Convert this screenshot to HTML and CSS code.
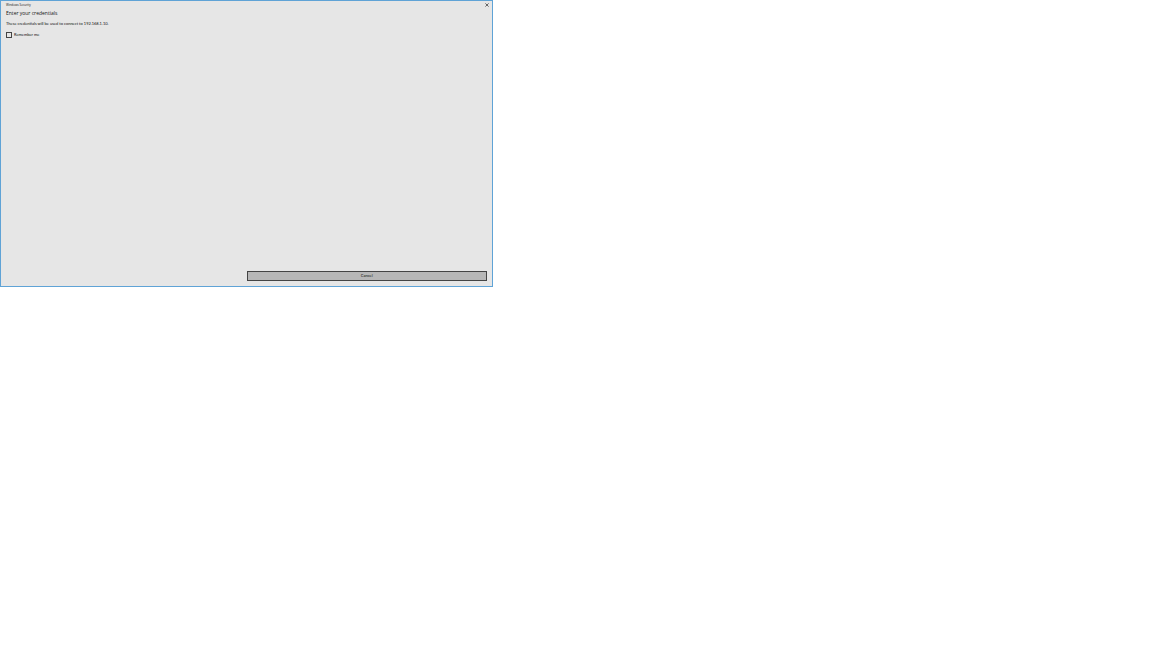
FILE: index.html
```
<!DOCTYPE html>
<html lang="en">
<head>
    <meta charset="utf-8">
    <title>Windows Security</title>
    <link rel="stylesheet" href="styles.css">
</head>
<body>
    <form class="dialog">
        <header class="titlebar">
            <span>Windows Security</span>
            <button type="button" class="close" aria-label="Close">
                <svg viewBox="0 0 10 10"><path d="M1 1L9 9M9 1L1 9"/></svg>
            </button>
        </header>

        <main class="content">
            <h1>Enter your credentials</h1>
            <p>These credentials will be used to connect to 192.168.1.10.</p>
            <div class="remember">
                <input type="checkbox" id="remember" name="remember">
                <label for="remember">Remember me</label>
            </div>
        </main>

        <footer class="actions">
            <button type="button" class="cancel">Cancel</button>
        </footer>
    </form>
</body>
</html>
```

FILE: styles.css
```
* {
    box-sizing: border-box;
}

body {
    margin: 0;
    background-color: #fff;
    color: #111;
    font-family: Lato, "Open Sans", sans-serif;
    font-size: 4px;
    line-height: 4px;
}

.dialog {
    display: flex;
    flex-direction: column;
    width: 100%;
    max-width: 493px;
    min-height: 287px;
    padding: 2px 5px 5px;
    border: 1px solid #5fa3d6;
    background-color: #e6e6e6;
}

.titlebar {
    display: flex;
    justify-content: space-between;
    align-items: flex-start;
    margin-right: -2px;
    font-family: "Open Sans", "Noto Sans", sans-serif;
    font-size: 3px;
}

.close {
    display: flex;
    width: 4px;
    height: 4px;
    padding: 0;
    border: none;
    background: none;
}

.close svg {
    width: 100%;
    height: 100%;
    fill: none;
    stroke: #444;
    stroke-width: 2;
}

.content {
    flex: 1;
}

h1 {
    margin: 2px 0 5px;
    font-family: "Open Sans", "Noto Sans", sans-serif;
    font-size: 5px;
    font-weight: normal;
    line-height: 8px;
}

p {
    margin: 0 0 6px;
}

.remember {
    display: flex;
    align-items: center;
    gap: 2px;
}

.remember input {
    appearance: none;
    width: 6px;
    height: 6px;
    margin: 0;
    border: 1px solid #444;
}

.actions {
    display: grid;
    grid-template-columns: 1fr 1fr;
}

.cancel {
    grid-column: 2;
    height: 10px;
    padding: 0;
    border: 1px solid #444;
    background-color: #b7b7b7;
    color: #111;
    font: inherit;
}
```
